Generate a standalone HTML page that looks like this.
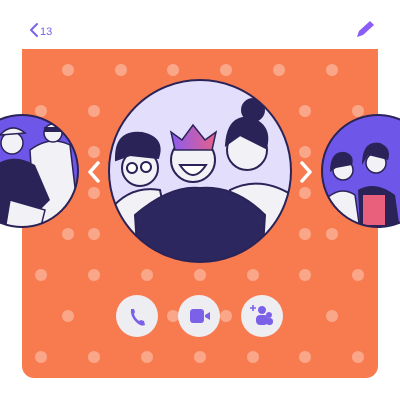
<!DOCTYPE html>
<html><head><style>
html,body{margin:0;padding:0;background:#fff;width:400px;height:400px;overflow:hidden;font-family:"Liberation Sans",sans-serif}
</style></head><body>
<svg width="400" height="400" viewBox="0 0 400 400" xmlns="http://www.w3.org/2000/svg">
<defs>
<clipPath id="cb"><circle cx="200" cy="171" r="91"/></clipPath>
<clipPath id="cl"><circle cx="22" cy="171" r="56"/></clipPath>
<clipPath id="cr"><circle cx="378" cy="171" r="56"/></clipPath>
<linearGradient id="cr1" x1="0" y1="0" x2="1" y2="0"><stop offset="0" stop-color="#8a5cf0"/><stop offset="1" stop-color="#e6608a"/></linearGradient>
</defs>
<!-- header -->
<path d="M37 24 L31 30 L37 36" fill="none" stroke="#7b61e8" stroke-width="2" stroke-linecap="round" stroke-linejoin="round"/>
<text x="40" y="35" font-size="11" fill="#7b61e8" font-family="Liberation Sans">13</text>
<path d="M357 37 L359 31 L370 21 L374 25 L363 35 Z" fill="#8b5cf6"/>
<!-- panel -->
<path d="M22 49 H378 V366 a12 12 0 0 1 -12 12 H34 a12 12 0 0 1 -12 -12 Z" fill="#f87b4f"/>
<g fill="#ffffff" fill-opacity="0.33">
<circle cx="68" cy="70" r="6"/><circle cx="121" cy="70" r="6"/><circle cx="173" cy="70" r="6"/><circle cx="226" cy="70" r="6"/><circle cx="279" cy="70" r="6"/><circle cx="332" cy="70" r="6"/>
<circle cx="41" cy="111" r="6"/><circle cx="94" cy="111" r="6"/><circle cx="305" cy="111" r="6"/><circle cx="358" cy="111" r="6"/>
<circle cx="94" cy="152" r="6"/><circle cx="305" cy="152" r="6"/>
<circle cx="94" cy="193" r="6"/><circle cx="305" cy="193" r="6"/>
<circle cx="94" cy="234" r="6"/><circle cx="305" cy="234" r="6"/><circle cx="68" cy="234" r="6"/><circle cx="332" cy="234" r="6"/>
<circle cx="41" cy="275" r="6"/><circle cx="94" cy="275" r="6"/><circle cx="147" cy="275" r="6"/><circle cx="200" cy="275" r="6"/><circle cx="253" cy="275" r="6"/><circle cx="305" cy="275" r="6"/><circle cx="358" cy="275" r="6"/>
<circle cx="68" cy="316" r="6"/><circle cx="173" cy="316" r="6"/><circle cx="226" cy="316" r="6"/><circle cx="332" cy="316" r="6"/>
<circle cx="41" cy="357" r="6"/><circle cx="94" cy="357" r="6"/><circle cx="147" cy="357" r="6"/><circle cx="200" cy="357" r="6"/><circle cx="253" cy="357" r="6"/><circle cx="305" cy="357" r="6"/><circle cx="358" cy="357" r="6"/>
</g>
<!-- left circle -->
<circle cx="22" cy="171" r="56" fill="#6e56e8"/>
<g clip-path="url(#cl)">
<path d="M30 150 Q50 135 70 145 L80 230 L35 230 Z" fill="#f2f1f6" stroke="#2a2358" stroke-width="1.5"/>
<circle cx="53" cy="133" r="9" fill="#f2f1f6" stroke="#2a2358" stroke-width="1.5"/>
<rect x="44" y="127" width="18" height="5" fill="#2a2358"/>
<path d="M-10 170 Q10 150 35 165 L50 200 L20 230 L-10 230 Z" fill="#2a2358"/>
<circle cx="12" cy="143" r="11" fill="#f2f1f6" stroke="#2a2358" stroke-width="1.5"/>
<path d="M0 135 Q12 122 25 133 Z" fill="#f2f1f6" stroke="#2a2358" stroke-width="1.5"/>
<path d="M10 200 L45 210 L40 230 L5 230 Z" fill="#f2f1f6" stroke="#2a2358" stroke-width="1.5"/>
</g>
<circle cx="22" cy="171" r="56" fill="none" stroke="#2a2358" stroke-width="2"/>
<!-- right circle -->
<circle cx="378" cy="171" r="56" fill="#6e56e8"/>
<g clip-path="url(#cr)">
<path d="M325 200 Q340 185 355 195 L360 230 L322 230 Z" fill="#f2f1f6" stroke="#2a2358" stroke-width="1.5"/>
<circle cx="343" cy="170" r="10" fill="#f2f1f6" stroke="#2a2358" stroke-width="1.5"/>
<path d="M330 172 Q330 150 345 152 Q355 155 352 165 L336 168 Z" fill="#2a2358"/>
<path d="M358 190 Q375 180 395 195 L400 230 L360 230 Z" fill="#2a2358"/>
<rect x="363" y="195" width="22" height="30" fill="#e8607c"/>
<circle cx="376" cy="163" r="10" fill="#f2f1f6" stroke="#2a2358" stroke-width="1.5"/>
<path d="M362 165 Q362 140 380 143 Q392 148 388 160 L368 155 Z" fill="#2a2358"/>
</g>
<circle cx="378" cy="171" r="56" fill="none" stroke="#2a2358" stroke-width="2"/>
<!-- big circle -->
<circle cx="200" cy="171" r="91" fill="#e3defb"/>
<g clip-path="url(#cb)" stroke="#2a2358" stroke-width="2">
<!-- left boy -->
<path d="M110 210 Q130 185 160 190 L175 262 L110 262 Z" fill="#f2f1f6"/>
<circle cx="140" cy="168" r="18" fill="#f2f1f6"/>
<path d="M116 160 Q115 130 142 133 Q165 138 158 158 L130 155 Z" fill="#2a2358"/>
<circle cx="132" cy="168" r="5" fill="#fff"/><circle cx="146" cy="167" r="5" fill="#fff"/>
<!-- right girl -->
<path d="M230 190 Q260 175 292 195 L295 262 L240 262 Z" fill="#f2f1f6"/>
<circle cx="247" cy="150" r="20" fill="#f2f1f6"/>
<path d="M226 145 Q228 115 250 118 Q272 125 266 148 L240 135 Z" fill="#2a2358"/>
<circle cx="253" cy="110" r="11" fill="#2a2358"/>
<!-- center body -->
<path d="M135 215 Q170 185 200 188 Q235 185 265 215 L262 262 L138 262 Z" fill="#2d2760"/>
<circle cx="193" cy="160" r="22" fill="#f2f1f6"/>
<path d="M180 165 Q193 185 206 165 Z" fill="#fff"/>
<path d="M171 132 L175 150 L212 150 L216 132 L205 140 L193 125 L182 140 Z" fill="url(#cr1)" stroke-width="1.5"/>
</g>
<circle cx="200" cy="171" r="91" fill="none" stroke="#2a2358" stroke-width="2"/>
<!-- chevrons -->
<path d="M98 163 L90 172 L98 181" fill="none" stroke="#fff" stroke-width="3.5" stroke-linecap="round" stroke-linejoin="round"/>
<path d="M302 163 L310 172 L302 181" fill="none" stroke="#fff" stroke-width="3.5" stroke-linecap="round" stroke-linejoin="round"/>
<!-- buttons -->
<circle cx="137" cy="316" r="21" fill="#eeedf2"/>
<circle cx="199" cy="316" r="21" fill="#eeedf2"/>
<circle cx="262" cy="316" r="21" fill="#eeedf2"/>
<path d="M131 309 Q130 316 136 322 Q141 327 145 325 L144 321 L141 320 L139 321 Q135 318 134 314 L135 312 L134 309 Z" fill="#7b61e8"/>
<rect x="190" y="309" width="14" height="14" rx="3" fill="#7b61e8"/>
<path d="M205 315 L210 312 V320 L205 317 Z" fill="#7b61e8"/>
<path d="M250 308 H256 M253 305 V311" stroke="#7b61e8" stroke-width="1.6"/>
<circle cx="262" cy="310" r="4" fill="#7b61e8"/>
<circle cx="269" cy="315" r="3" fill="#7b61e8"/>
<rect x="256" y="315" width="12" height="10" rx="4" fill="#7b61e8"/>
<rect x="266" y="318" width="7" height="7" rx="3" fill="#7b61e8"/>
</svg>
</body></html>
